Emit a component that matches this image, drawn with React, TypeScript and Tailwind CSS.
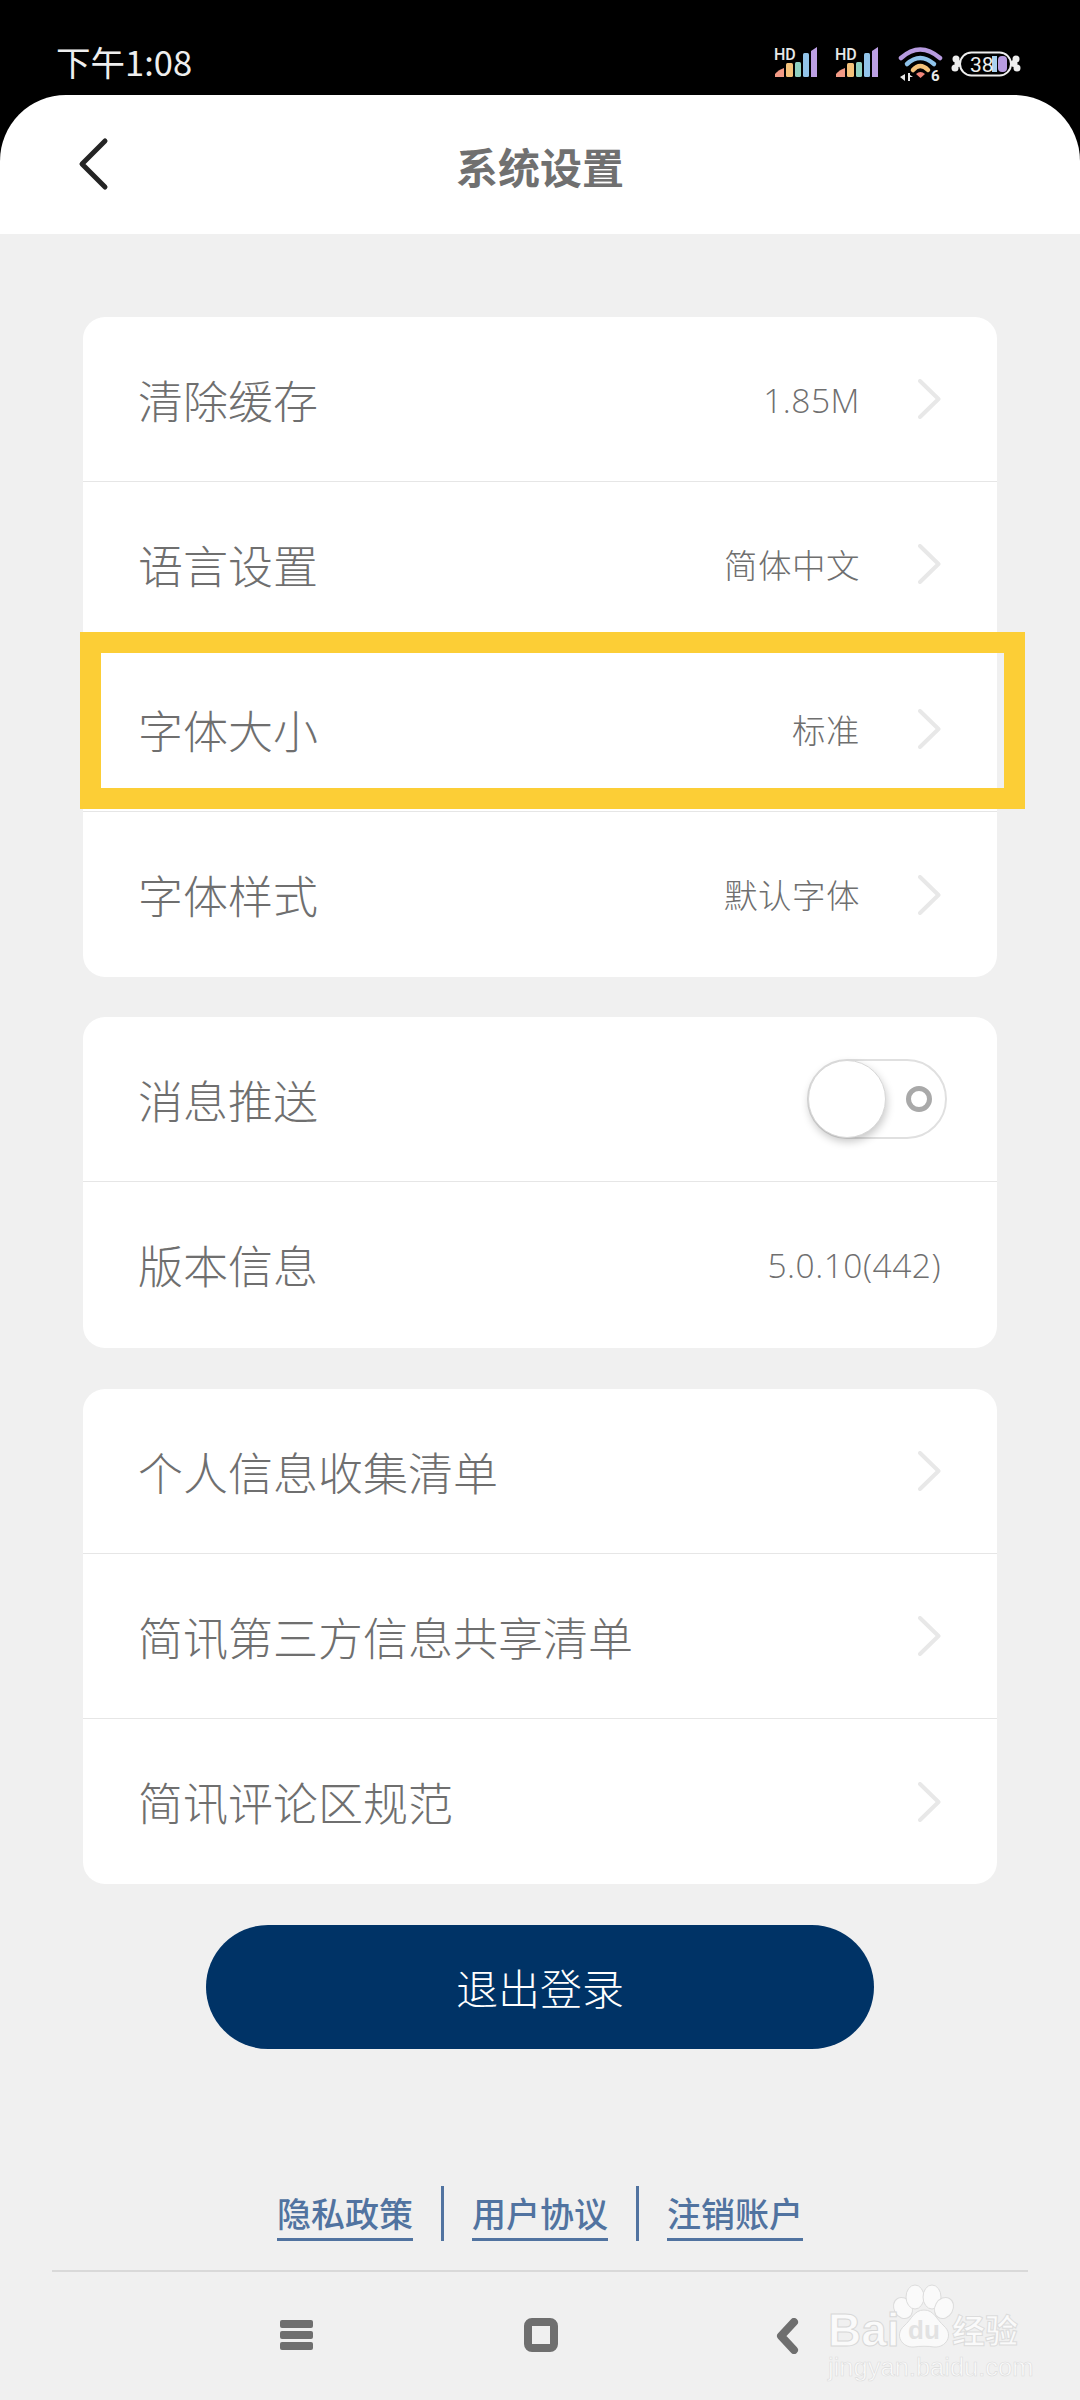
import React from "react";

const cjk = { fontFamily: '"Noto Sans CJK SC", "Noto Sans", sans-serif' };
const valueFont = { fontFamily: '"Open Sans", "Noto Sans CJK SC", sans-serif' };

function Signal() {
  return (
    <svg width="44" height="37" viewBox="0 -6 44 37" className="-mt-[6px]">
      <text x="0" y="13" fill="#e8e8e8" fontSize="16" fontWeight="500" fontFamily="Roboto, sans-serif">HD</text>
      <path d="M1 30 L1 27 Q4 23 10 21 L10 30 Z" fill="#f29a85" />
      <rect x="12" y="16" width="7" height="14" rx="1.5" fill="#f4c27a" />
      <rect x="21" y="15" width="6" height="15" rx="1.5" fill="#8fd0c0" />
      <rect x="29" y="6" width="6" height="24" rx="1.5" fill="#92c4ea" />
      <path d="M37 4 L43 0 L43 30 L37 30 Z" fill="#bca0e4" />
    </svg>
  );
}

function Wifi() {
  return (
    <svg width="48" height="38" viewBox="0 0 48 38" fill="none">
      <path d="M3 11 Q22 -6 42 11" stroke="#b79be0" strokeWidth="4.5" strokeLinecap="round" />
      <path d="M9 17 Q22 5 36 17" stroke="#8fc3ea" strokeWidth="4.5" strokeLinecap="round" />
      <path d="M15 23 Q22 15 30 23" stroke="#f4c27a" strokeWidth="4.5" strokeLinecap="round" />
      <path d="M18 27 Q22.500 23 27 27 L22.500 31 Z" fill="#f0857a" />
      <path d="M7 27 L7 34 L2 30 Z M10 26 L12 26 L12 28 L15 30 L12 30 L12 34 L10 34 Z" fill="#e8e8e8" />
      <text x="33" y="34" fill="#e8e8e8" fontSize="15" fontWeight="700" fontFamily="Roboto, sans-serif">6</text>
    </svg>
  );
}

function Battery() {
  return (
    <svg width="72" height="26" viewBox="0 0 72 26" fill="none">
      <circle cx="5" cy="8" r="3.500" fill="#eee" />
      <circle cx="4" cy="17" r="3.500" fill="#eee" />
      <circle cx="7" cy="12.500" r="3.500" fill="#eee" />
      <circle cx="65" cy="8" r="3.500" fill="#eee" />
      <circle cx="66" cy="17" r="3.500" fill="#eee" />
      <circle cx="63" cy="12.500" r="3.500" fill="#eee" />
      <rect x="9" y="1.500" width="51" height="23" rx="11.500" fill="#000" stroke="#eee" strokeWidth="2" />
      <rect x="41" y="5" width="5" height="16" fill="#a9d2ee" />
      <rect x="47" y="5" width="9" height="16" rx="4" fill="#b79be0" />
      <text x="19" y="20.500" fill="#eee" fontSize="21" fontFamily="Roboto, sans-serif">38</text>
    </svg>
  );
}

function Chevron() {
  return (
    <svg width="23" height="40" viewBox="0 0 23 40" fill="none" className="shrink-0">
      <path d="M2 2 L20.500 20 L2 38" stroke="#e8e8e8" strokeWidth="4" strokeLinecap="round" strokeLinejoin="round" />
    </svg>
  );
}

function Row({ label, value, chevron = true, last = false, children }: { label: string; value?: string; chevron?: boolean; last?: boolean; children?: React.ReactNode }) {
  return (
    <div className={`flex h-[165px] items-center pl-[56px] pr-[56px] ${last ? "" : "border-b border-[#e6e6e6]"}`}>
      <span className="-ml-[1px] flex-1 text-[45px] font-light leading-none text-[#6f6f6f]">{label}</span>
      {value && (
        <span style={valueFont} className={`pt-[3px] text-[33.500px] font-light leading-none tracking-[0.5px] text-[#6f6f6f] ${chevron ? "mr-[58px]" : ""}`}>
          {value}
        </span>
      )}
      {chevron && <Chevron />}
      {children}
    </div>
  );
}

function Card({ children, className = "" }: { children: React.ReactNode; className?: string }) {
  return <div className={`mx-[83px] overflow-hidden rounded-[22px] bg-white ${className}`}>{children}</div>;
}

function Toggle() {
  return (
    <div className="relative -mr-[6px] h-[80px] w-[140px] rounded-full border-2 border-[#e0e0e0]">
      <div className="absolute -left-[1px] -top-[1px] h-[78px] w-[78px] rounded-full border border-[#d8d8d8] bg-white shadow-[1px_4px_8px_rgba(0,0,0,0.22)]" />
      <div className="absolute left-[97px] top-[25px] h-[26px] w-[26px] rounded-full border-[5px] border-[#a9a9a9]" />
    </div>
  );
}

function LinkItem({ text }: { text: string }) {
  return (
    <span className="h-[55px] w-[136px] border-b-[3px] border-[#5173a0] pt-[3px] text-center text-[34px] font-medium leading-[48px] text-[#5173a0]">{text}</span>
  );
}

function Watermark() {
  return (
    <div className="absolute left-[828px] top-[2283px] h-[96px] w-[196px] text-white">
      <svg width="196" height="66" viewBox="0 0 196 66" className="absolute left-0 top-0" fill="#fafafa" stroke="#dcdcdc" strokeWidth="1">
        <ellipse cx="75" cy="25" rx="9" ry="11" transform="rotate(-30 75 25)" />
        <ellipse cx="87" cy="14" rx="9" ry="12" />
        <ellipse cx="104" cy="14" rx="9" ry="12" />
        <ellipse cx="116" cy="25" rx="9" ry="11" transform="rotate(30 116 25)" />
        <path d="M96 27 C106 27 108 36 116 43 C126 52 118 65 106 64 C100 63 92 63 86 64 C74 65 66 52 76 43 C84 36 86 27 96 27 Z" />
      </svg>
      <span className="absolute left-0 top-[25px] text-[46px] font-bold leading-[44px] text-[#fafafa] [font-family:'Liberation_Sans',sans-serif] [-webkit-text-stroke:1px_#d8d8d8]">Bai</span>
      <span className="absolute left-[80px] top-[34px] text-[26px] font-bold leading-[26px] text-[#e2e2e2] [font-family:'Liberation_Sans',sans-serif]">du</span>
      <span className="absolute left-[124px] top-[28px] text-[33px] font-bold leading-[36px] text-[#fafafa] [-webkit-text-stroke:1px_#dcdcdc]" style={cjk}>经验</span>
      <span className="absolute left-0 top-[71px] text-[25.500px] leading-[26px] text-[#fafafa] [font-family:'Liberation_Sans',sans-serif] [-webkit-text-stroke:0.6px_#dcdcdc]">jingyan.baidu.com</span>
    </div>
  );
}

export default function App() {
  return (
    <div className="relative h-[2400px] w-[1080px] overflow-hidden bg-[#f0f0f0]" style={cjk}>
      {/* status bar */}
      <div className="flex h-[96px] items-start bg-black pl-[56px] pr-[57px]">
        <span className="mt-[43px] text-[34.500px] leading-[36px] text-[#eeeeee]">下午1:08</span>
        <div className="ml-auto mt-[47px] flex items-start">
          <Signal />
          <div className="ml-[17px]"><Signal /></div>
          <div className="ml-[19px]"><Wifi /></div>
          <div className="ml-[5px] mt-[4px]"><Battery /></div>
        </div>
      </div>

      {/* header */}
      <div className="-mt-[1px] bg-black">
        <div className="relative flex h-[139px] items-center justify-center rounded-t-[66px] bg-white">
          <svg width="32" height="54" viewBox="0 0 32 54" fill="none" className="absolute left-[78px] top-[42px]">
            <path d="M27 4 L4 27 L27 50" stroke="#242424" strokeWidth="5" strokeLinecap="round" strokeLinejoin="round" />
          </svg>
          <span className="mt-[2px] text-[42px] font-bold leading-none text-[#707070]">系统设置</span>
        </div>
      </div>

      <Card className="mt-[83px]">
        <Row label="清除缓存" value="1.85M" />
        <Row label="语言设置" value="简体中文" />
        <Row label="字体大小" value="标准" />
        <Row label="字体样式" value="默认字体" last />
      </Card>

      <Card className="mt-[40px] pb-[1px]">
        <Row label="消息推送" chevron={false}>
          <Toggle />
        </Row>
        <Row label="版本信息" value="5.0.10(442)" chevron={false} last />
      </Card>

      <Card className="mt-[41px]">
        <Row label="个人信息收集清单" />
        <Row label="简讯第三方信息共享清单" />
        <Row label="简讯评论区规范" last />
      </Card>

      <div className="mx-auto mt-[41px] flex h-[124px] w-[668px] items-center justify-center rounded-full bg-[#003366] text-[42px] font-light leading-none text-white">
        退出登录
      </div>

      <div className="mt-[137px] flex items-start justify-center">
        <LinkItem text="隐私政策" />
        <div className="mx-[28px] h-[55px] w-[3px] bg-[#5173a0]" />
        <LinkItem text="用户协议" />
        <div className="mx-[28px] h-[55px] w-[3px] bg-[#5173a0]" />
        <LinkItem text="注销账户" />
      </div>

      <div className="mx-[52px] mt-[29px] h-[2px] bg-[#d9d9d9]" />

      {/* nav bar */}
      <div className="relative mt-[46px] h-[36px]">
        <div className="absolute left-[280px] top-[2px] flex h-[30px] w-[33px] flex-col justify-between">
          <div className="h-[8px] rounded-[2px] bg-[#6f6f6f]" />
          <div className="h-[8px] rounded-[2px] bg-[#6f6f6f]" />
          <div className="h-[8px] rounded-[2px] bg-[#6f6f6f]" />
        </div>
        <div className="absolute left-[524px] top-0 h-[34px] w-[34px] rounded-[8px] border-[8px] border-[#6f6f6f]" />
        <svg width="24" height="36" viewBox="0 0 24 36" fill="none" className="absolute left-[775px] top-0">
          <path d="M19 4 L6 18 L19 32" stroke="#6f6f6f" strokeWidth="8" strokeLinecap="round" strokeLinejoin="round" />
        </svg>
      </div>

      {/* annotation frame */}
      <div className="absolute left-[80px] top-[632px] h-[177px] w-[945px] border-[21px] border-[#fcce36]" />
      <Watermark />
    </div>
  );
}
